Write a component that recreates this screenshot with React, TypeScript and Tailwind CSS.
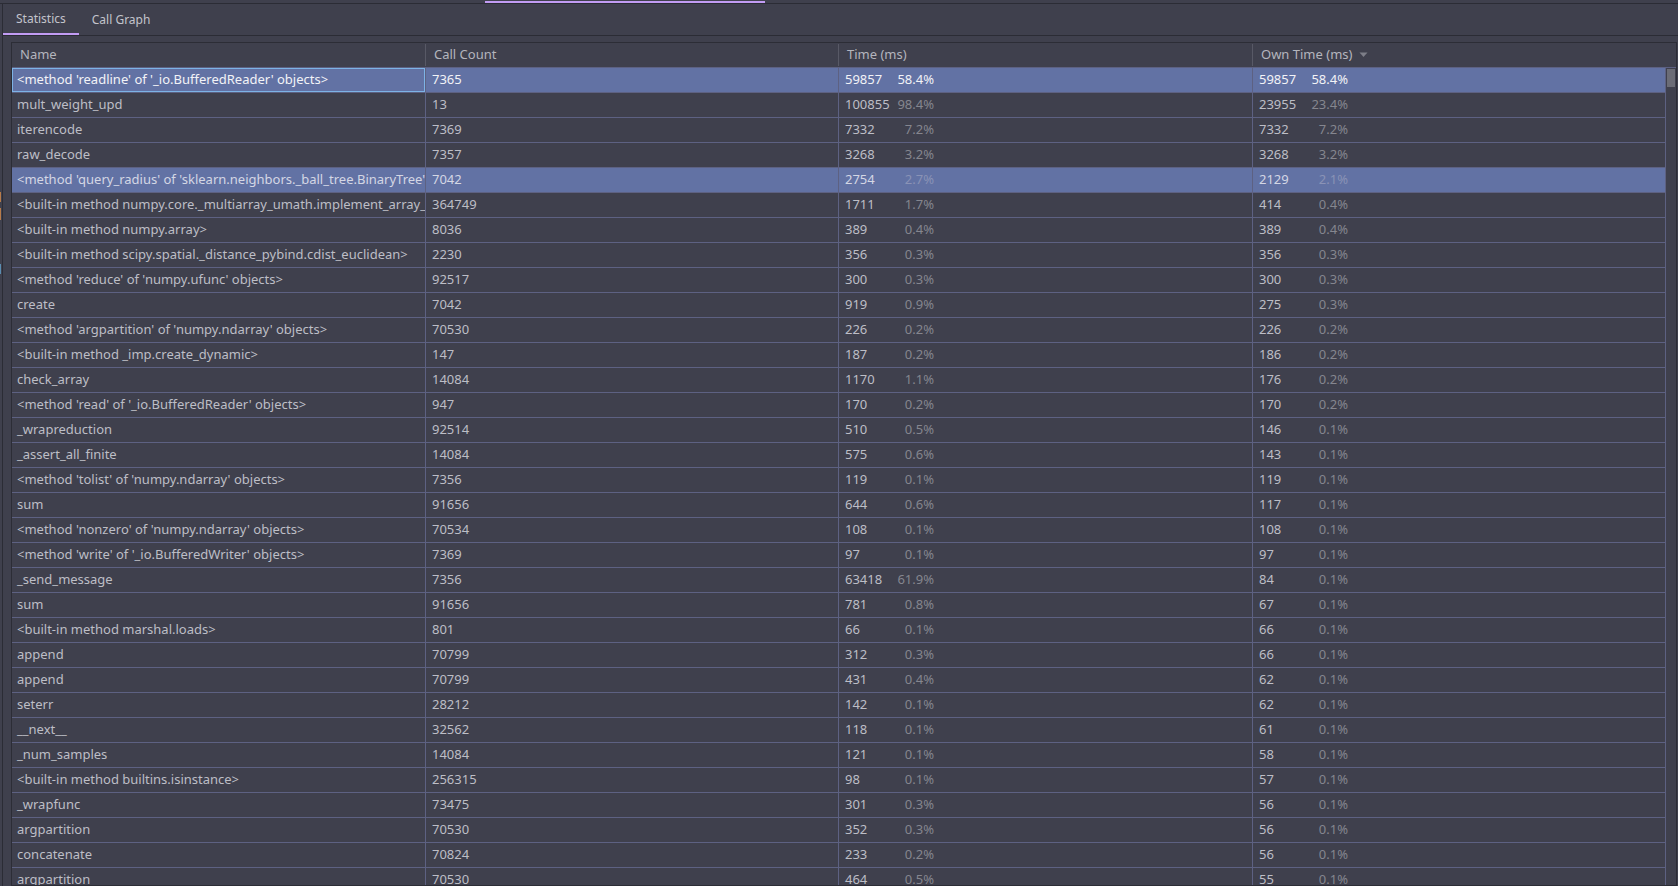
import React from 'react';

type Row = {
  name: string;
  calls: string;
  time: string;
  timePct: string;
  own: string;
  ownPct: string;
};

const ROWS: Row[] = [
  { name: "<method 'readline' of '_io.BufferedReader' objects>", calls: '7365', time: '59857', timePct: '58.4%', own: '59857', ownPct: '58.4%' },
  { name: 'mult_weight_upd', calls: '13', time: '100855', timePct: '98.4%', own: '23955', ownPct: '23.4%' },
  { name: 'iterencode', calls: '7369', time: '7332', timePct: '7.2%', own: '7332', ownPct: '7.2%' },
  { name: 'raw_decode', calls: '7357', time: '3268', timePct: '3.2%', own: '3268', ownPct: '3.2%' },
  { name: "<method 'query_radius' of 'sklearn.neighbors._ball_tree.BinaryTree' objects>", calls: '7042', time: '2754', timePct: '2.7%', own: '2129', ownPct: '2.1%' },
  { name: '<built-in method numpy.core._multiarray_umath.implement_array_function>', calls: '364749', time: '1711', timePct: '1.7%', own: '414', ownPct: '0.4%' },
  { name: '<built-in method numpy.array>', calls: '8036', time: '389', timePct: '0.4%', own: '389', ownPct: '0.4%' },
  { name: '<built-in method scipy.spatial._distance_pybind.cdist_euclidean>', calls: '2230', time: '356', timePct: '0.3%', own: '356', ownPct: '0.3%' },
  { name: "<method 'reduce' of 'numpy.ufunc' objects>", calls: '92517', time: '300', timePct: '0.3%', own: '300', ownPct: '0.3%' },
  { name: 'create', calls: '7042', time: '919', timePct: '0.9%', own: '275', ownPct: '0.3%' },
  { name: "<method 'argpartition' of 'numpy.ndarray' objects>", calls: '70530', time: '226', timePct: '0.2%', own: '226', ownPct: '0.2%' },
  { name: '<built-in method _imp.create_dynamic>', calls: '147', time: '187', timePct: '0.2%', own: '186', ownPct: '0.2%' },
  { name: 'check_array', calls: '14084', time: '1170', timePct: '1.1%', own: '176', ownPct: '0.2%' },
  { name: "<method 'read' of '_io.BufferedReader' objects>", calls: '947', time: '170', timePct: '0.2%', own: '170', ownPct: '0.2%' },
  { name: '_wrapreduction', calls: '92514', time: '510', timePct: '0.5%', own: '146', ownPct: '0.1%' },
  { name: '_assert_all_finite', calls: '14084', time: '575', timePct: '0.6%', own: '143', ownPct: '0.1%' },
  { name: "<method 'tolist' of 'numpy.ndarray' objects>", calls: '7356', time: '119', timePct: '0.1%', own: '119', ownPct: '0.1%' },
  { name: 'sum', calls: '91656', time: '644', timePct: '0.6%', own: '117', ownPct: '0.1%' },
  { name: "<method 'nonzero' of 'numpy.ndarray' objects>", calls: '70534', time: '108', timePct: '0.1%', own: '108', ownPct: '0.1%' },
  { name: "<method 'write' of '_io.BufferedWriter' objects>", calls: '7369', time: '97', timePct: '0.1%', own: '97', ownPct: '0.1%' },
  { name: '_send_message', calls: '7356', time: '63418', timePct: '61.9%', own: '84', ownPct: '0.1%' },
  { name: 'sum', calls: '91656', time: '781', timePct: '0.8%', own: '67', ownPct: '0.1%' },
  { name: '<built-in method marshal.loads>', calls: '801', time: '66', timePct: '0.1%', own: '66', ownPct: '0.1%' },
  { name: 'append', calls: '70799', time: '312', timePct: '0.3%', own: '66', ownPct: '0.1%' },
  { name: 'append', calls: '70799', time: '431', timePct: '0.4%', own: '62', ownPct: '0.1%' },
  { name: 'seterr', calls: '28212', time: '142', timePct: '0.1%', own: '62', ownPct: '0.1%' },
  { name: '__next__', calls: '32562', time: '118', timePct: '0.1%', own: '61', ownPct: '0.1%' },
  { name: '_num_samples', calls: '14084', time: '121', timePct: '0.1%', own: '58', ownPct: '0.1%' },
  { name: '<built-in method builtins.isinstance>', calls: '256315', time: '98', timePct: '0.1%', own: '57', ownPct: '0.1%' },
  { name: '_wrapfunc', calls: '73475', time: '301', timePct: '0.3%', own: '56', ownPct: '0.1%' },
  { name: 'argpartition', calls: '70530', time: '352', timePct: '0.3%', own: '56', ownPct: '0.1%' },
  { name: 'concatenate', calls: '70824', time: '233', timePct: '0.2%', own: '56', ownPct: '0.1%' },
  { name: 'argpartition', calls: '70530', time: '464', timePct: '0.5%', own: '55', ownPct: '0.1%' },
];

const COLS = 'grid grid-cols-[414px_413px_414px_413px]';

const TimeCell: React.FC<{ value: string; pct: string; pctClass: string }> = ({ value, pct, pctClass }) => (
  <div className="flex items-center pl-[6px] border-r border-[#5d6182]">
    <div className="flex w-[89px] justify-between">
      <span>{value}</span>
      <span className={pctClass}>{pct}</span>
    </div>
  </div>
);

const App: React.FC = () => {
  return (
    <div className="w-[1678px] h-[886px] overflow-hidden bg-[#3f404d] flex flex-col font-['Noto_Sans',sans-serif] text-[13px] text-[#bdbec6]">
      {/* strip left over from the tool window above */}
      <div className="h-[3px] flex shrink-0">
        <div className="w-[485px]" />
        <div className="w-[280px] mt-px bg-[#c29cf4]" />
      </div>
      <div className="h-px bg-[#2b2c35] shrink-0" />

      <div className="flex flex-1 min-h-0">
        <div className="w-[3px] shrink-0 flex">
          <div className="w-[2px] flex flex-col pt-[188px] gap-[6px]">
            <div className="h-[10px] w-px bg-[#b77b4a]" />
            <div className="h-[12px] w-px bg-[#b77b4a]" />
            <div className="h-[10px] w-px mt-[38px] bg-[#5a8cb0]" />
          </div>
          <div className="w-px bg-[#2b2c35]" />
        </div>

        <div className="flex-1 flex flex-col min-w-0">
          {/* tabs */}
          <div className="h-[32px] flex border-b border-[#2b2c35] shrink-0 text-[12px]">
            <div className="px-[13px] flex items-center border-b-2 border-[#c29cf4] text-[#c3c4cc] pt-px">
              Statistics
            </div>
            <div className="px-[13px] flex items-center text-[#c3c4cc]">Call Graph</div>
          </div>

          {/* table */}
          <div className="flex-1 min-h-0 pt-[6px] pl-[8px] pr-px">
            <div className="h-full border border-[#2c2d36] flex flex-col overflow-hidden">
              <div className="flex shrink-0 border-b border-[#5d6182]">
                <div className={`${COLS} h-[24px] text-[#b4b5bd]`}>
                  <div className="flex items-center pl-[8px] border-r border-[#585966] my-[1px]">Name</div>
                  <div className="flex items-center pl-[8px] border-r border-[#585966] my-[1px]">Call Count</div>
                  <div className="flex items-center pl-[8px] border-r border-[#585966] my-[1px]">Time (ms)</div>
                  <div className="flex items-center pl-[8px] gap-[7px]">
                    Own Time (ms)
                    <svg width="9" height="6" viewBox="0 0 9 6">
                      <path d="M0.5 0.5h8L4.5 5z" fill="#7d7e88" />
                    </svg>
                  </div>
                </div>
              </div>

              <div className="flex flex-1 min-h-0">
                <div className="flex flex-col">
                  {ROWS.map((r, i) => {
                    const focused = i === 0;
                    const selected = i === 0 || i === 4;
                    const rowCls = selected
                      ? focused
                        ? 'bg-[#6272a4] text-[#f2f3f7]'
                        : 'bg-[#6272a4] text-[#d4d7e4]'
                      : '';
                    const pctCls = focused ? 'text-[#f2f3f7]' : selected ? 'text-[#8a93b6]' : 'text-[#85868f]';
                    return (
                      <div
                        key={i}
                        className={`${COLS} h-[25px] shrink-0 border-b border-[#5d6182] ${rowCls}`}
                      >
                        <div
                          className={`flex items-center pl-[5px] pr-px border-r border-[#5d6182] overflow-hidden whitespace-nowrap ${
                            focused ? 'shadow-[inset_0_0_0_1px_#7db3e6]' : ''
                          }`}
                        >
                          {r.name}
                        </div>
                        <div className="flex items-center pl-[6px] border-r border-[#5d6182]">{r.calls}</div>
                        <TimeCell value={r.time} pct={r.timePct} pctClass={pctCls} />
                        <TimeCell value={r.own} pct={r.ownPct} pctClass={pctCls} />
                      </div>
                    );
                  })}
                </div>
                {/* scrollbar */}
                <div className="w-[10px] pt-[1px] pl-[1px] pr-px">
                  <div className="h-[18px] bg-[#6b6c76]" />
                </div>
              </div>
            </div>
          </div>
        </div>
      </div>
    </div>
  );
};

export default App;
